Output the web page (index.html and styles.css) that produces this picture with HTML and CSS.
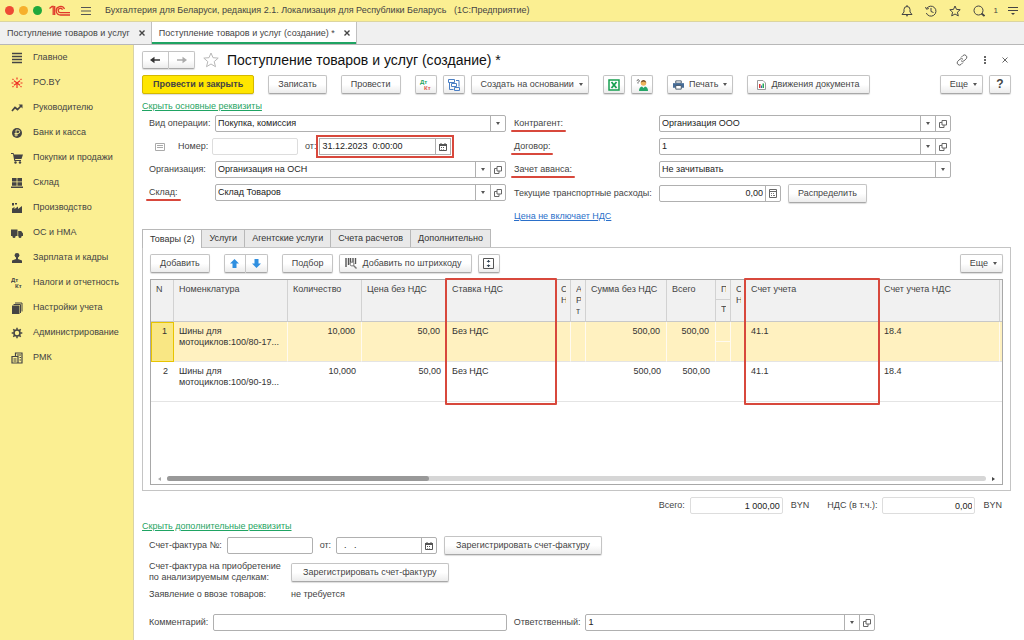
FILE: index.html
```
<!DOCTYPE html>
<html lang="ru">
<head>
<meta charset="utf-8">
<title>Поступление товаров и услуг (создание)</title>
<link rel="stylesheet" href="styles.css">
</head>
<body>
<svg class="defs" aria-hidden="true">
  <symbol id="open" viewBox="0 0 8 8"><path d="M3 .5h4.500v4.500H3zM3 2.500H.5v5h4.500V5" fill="none" stroke="#666"/></symbol>
  <symbol id="cal" viewBox="0 0 8 8"><path d="M.5 1.500h7v6h-7zM2 0v1M6 0v1" fill="none" stroke="#555"/><path d="M0 1h8v2H0zM2 4h1v1H2zM4 4h1v1H4zM2 6h1v.6H2zM4 6h1v.6H4z" fill="#555"/></symbol>
  <symbol id="calc" viewBox="0 0 8 9"><path d="M.5.5h7v8h-7zM1 2.500h6" fill="none" stroke="#666"/><path d="M2 4h1v1H2zM4 4h1v1H4zM2 6h1v1H2zM4 6h2v1H4z" fill="#777"/></symbol>
</svg>
<header class="topbar">
  <span class="dots"><i class="dot red"></i><i class="dot amber"></i><i class="dot green"></i></span>
  <svg class="logo" width="22" height="12" viewBox="0 0 22 12" fill="none" stroke="#e0392b"><path d="M.5 3.500 3 1.500h1.200V10M5.700 10V1" stroke-width="1.300"/><path d="M15.500 4A4.300 4.300 0 1 0 11.500 10H21" stroke-width="1.300"/><path d="M13.500 4.700A2.200 2.200 0 1 0 11.500 7.700H21" stroke-width="1.300"/></svg>
  <button class="bare" aria-label="Меню"><svg width="12" height="10" viewBox="0 0 12 10"><path d="M1 1.500h10M1 5h10M1 8.500h10" stroke="#555"/></svg></button>
  <span class="apptitle">Бухгалтерия для Беларуси, редакция 2.1. Локализация для Республики Беларусь &nbsp; (1С:Предприятие)</span>
  <span class="topicons">
    <button class="bare" aria-label="Уведомления"><svg width="12" height="12" viewBox="0 0 12 12" fill="none" stroke="#444"><path d="M1 9.500h10L9 7V4.500a3 3 0 0 0-6 0V7zM6 0v1.500M5 10.500q1 1 2 0"/></svg></button>
    <button class="bare" aria-label="История"><svg width="12" height="12" viewBox="0 0 12 12" fill="none" stroke="#444"><path d="M1.700 3.500A5 5 0 1 1 1.300 8M.5 2l1 2.200 2.300-.7M6 3v3.500l2.500 1"/></svg></button>
    <button class="bare" aria-label="Избранное"><svg width="12" height="12" viewBox="0 0 12 12" fill="none" stroke="#444"><path d="m6 1 1.500 3.400 3.700.3-2.800 2.500.9 3.700L6 9l-3.300 1.900.9-3.700L.8 4.700l3.700-.3z"/></svg></button>
    <button class="bare" aria-label="Поиск"><svg width="12" height="12" viewBox="0 0 12 12" fill="none" stroke="#444"><circle cx="5.500" cy="5.500" r="4.500"/><path d="m8.500 8.500 3 2.500" stroke-width="1.800"/></svg></button>
    <span class="count">1</span>
    <button class="bare" aria-label="Сервис"><svg width="12" height="10" viewBox="0 0 12 10"><path d="M1 1.500h10M1 4.500h10" stroke="#444"/><path d="M4 7h4L6 9z" fill="#444"/></svg></button>
  </span>
</header>
<nav class="tabs">
  <div class="tab"><a href="#">Поступление товаров и услуг</a><button class="bare close" aria-label="Закрыть"><svg width="6" height="6" viewBox="0 0 6 6"><path d="m.5.5 5 5m0-5-5 5" stroke="#444" stroke-width="1.400"/></svg></button></div>
  <div class="tab current"><a href="#">Поступление товаров и услуг (создание) *</a><button class="bare close" aria-label="Закрыть"><svg width="6" height="6" viewBox="0 0 6 6"><path d="m.5.5 5 5m0-5-5 5" stroke="#444" stroke-width="1.400"/></svg></button></div>
</nav>
<div class="shell">
<nav class="side">
  <a href="#"><svg viewBox="0 0 12 12"><path d="M1 1.500h10M1 4.500h10M1 7.500h10M1 10.500h10" stroke="#444" stroke-width="1.500"/></svg>Главное</a>
  <a href="#"><svg viewBox="0 0 12 12"><path d="M6 6 3 3.800M6 6l3-2.200M6 6v5M6 6 3 8.200M6 6l3 2.200M6 .5v2M.5 6h2M9.500 6h2M1.500 2l1 .8M10.500 2l-1 .8M1.500 10l1-.8M10.500 10l-1-.8" stroke="#ee3124" stroke-width="1.200"/></svg>PO.BY</a>
  <a href="#"><svg viewBox="0 0 12 12"><path d="m1 9 3-3.500 2.500 2L10 4" fill="none" stroke="#444" stroke-width="1.700"/><path d="M7.500 2.500H11.500V6.500z" fill="#444"/></svg>Руководителю</a>
  <a href="#"><svg viewBox="0 0 12 12"><circle cx="6" cy="6" r="5" fill="#444"/><path d="M5 9.500V3h2a1.700 1.700 0 0 1 0 3.500H3.500M3.500 8H7" fill="none" stroke="#fbef92" stroke-width=".9"/></svg>Банк и касса</a>
  <a href="#"><svg viewBox="0 0 12 12" fill="#444"><path d="M0 1h2.500l.5 1.500h9L10.500 7H4l.3 1H10v1H3.300L2 2H0z"/><circle cx="4.500" cy="10.500" r="1.200"/><circle cx="9" cy="10.500" r="1.200"/></svg>Покупки и продажи</a>
  <a href="#"><svg viewBox="0 0 12 12" fill="#444"><path d="M1 1h4.600v3.500H1zM6.400 1H11v3.500H6.400zM1 5.200h4.600v3.500H1zM6.400 5.200H11v3.500H6.400zM0 9.500h12V11H0z"/></svg>Склад</a>
  <a href="#"><svg viewBox="0 0 12 12" fill="#444"><path d="M1 11V6.500L3.500 5v2L7 4.500V7l4-3v7zM1 1h2v2.500H1zM4 1h2v1.500H4z"/></svg>Производство</a>
  <a href="#"><svg viewBox="0 0 12 12" fill="#444"><path d="M0 2.500h6.500V9H0zM7.200 4h3L12 6.500V9H7.200z"/><circle cx="3" cy="9.500" r="1.500"/><circle cx="9" cy="9.500" r="1.500"/></svg>ОС и НМА</a>
  <a href="#"><svg viewBox="0 0 12 12" fill="#444"><circle cx="6" cy="3.300" r="2.400"/><path d="M5 5h2v2l4 1.500V11H1V8.500L5 7z"/></svg>Зарплата и кадры</a>
  <a href="#"><svg viewBox="0 0 12 12" fill="#444" font-size="6" font-weight="700"><text x="0" y="5">Дт</text><text x="4" y="11">Кт</text></svg>Налоги и отчетность</a>
  <a href="#"><svg viewBox="0 0 12 12"><path d="M1 3.500h7.500V12H1z" fill="#444"/><path d="M2.500 2.500h7V11M4 1h7v8.500" fill="none" stroke="#444"/></svg>Настройки учета</a>
  <a href="#"><svg viewBox="0 0 12 12" fill="none" stroke="#444"><circle cx="6" cy="6" r="3" stroke-width="1.600"/><path d="M6 .7v2M6 9.300v2M.7 6h2M9.300 6h2M2.300 2.300l1.300 1.300M8.400 8.400l1.300 1.300M2.300 9.700l1.300-1.300M8.400 3.600l1.300-1.300" stroke-width="1.500"/></svg>Администрирование</a>
  <a href="#"><svg viewBox="0 0 12 12" fill="none" stroke="#444" stroke-width="1.200"><path d="M1 4.500h6V11H1zM4.500 4V1H11v10H7.500M2.500 7h3M2.500 9h3M6 3h4M8.500 5.500h1.500M8.500 8h1.500"/></svg>РМК</a>
</nav>
<main class="doc">
  <div class="titlebar">
    <span class="pair"><button class="btn" aria-label="Назад"><svg width="11" height="8" viewBox="0 0 11 8"><path d="M10 4H3" stroke="#333" stroke-width="1.500"/><path d="M0 4 4.500.8v6.400z" fill="#333"/></svg></button><button class="btn" aria-label="Вперед"><svg width="11" height="8" viewBox="0 0 11 8"><path d="M1 4h7" stroke="#aaa" stroke-width="1.500"/><path d="M11 4 6.500.8v6.400z" fill="#aaa"/></svg></button></span>
    <svg width="16" height="16" viewBox="0 0 16 16"><path d="m8 1 2 4.700 5.200.4-4 3.500 1.300 5.100L8 12l-4.500 2.700 1.300-5.100-4-3.500L6 5.700z" fill="#fff" stroke="#b8b8b8"/></svg>
    <h1>Поступление товаров и услуг (создание) *</h1>
    <span class="docicons">
      <button class="bare" aria-label="Ссылка"><svg width="12" height="12" viewBox="0 0 12 12" fill="none" stroke="#666"><path d="m5 3.500 2-2q1.500-1.300 3 0t.5 3L8 6.800q-1.500 1.200-3 0M7 8.500l-2 2q-1.500 1.300-3 0t-.5-3L4 5.200q1.500-1.200 3 0"/></svg></button>
      <button class="bare" aria-label="Еще"><svg width="4" height="10" viewBox="0 0 4 10"><path d="M1 1h2v2H1zM1 4h2v2H1zM1 7h2v2H1z" fill="#666"/></svg></button>
      <button class="bare" aria-label="Закрыть"><svg width="6" height="6" viewBox="0 0 6 6"><path d="m.5.5 5 5m0-5-5 5" stroke="#666"/></svg></button>
    </span>
  </div>
  <div class="commands">
    <button class="btn primary">Провести и закрыть</button>
    <button class="btn">Записать</button>
    <button class="btn">Провести</button>
    <span class="set">
      <button class="btn icon" aria-label="Дт Кт"><svg width="14" height="12" viewBox="0 0 14 12" font-size="6" font-weight="700"><text x="1" y="5" fill="#1fa463">Дт</text><text x="5" y="11" fill="#e0584b">Кт</text></svg></button>
      <button class="btn icon" aria-label="Структура"><svg width="12" height="12" viewBox="0 0 12 12" fill="none" stroke="#4b7fc4"><path d="M.5.500h6v3h-6zM3.500 4.500h5v3h-5zM6.500 8.500h5v3h-5zM1.500 4v6.500h4M8 1.500h3v6"/></svg></button>
      <button class="btn drop">Создать на основании<i class="caret"></i></button>
    </span>
    <span class="set">
      <button class="btn icon" aria-label="Excel"><svg width="12" height="12" viewBox="0 0 12 12" fill="none" stroke="#17a050"><path d="M1 1h10v10H1z" stroke-width="1.500"/><path d="m3.500 3 5 6m0-6-5 6" stroke-width="1.800"/></svg></button>
      <button class="btn icon" aria-label="Помощник"><svg width="12" height="12" viewBox="0 0 12 12"><circle cx="7.500" cy="4" r="2.800" fill="#efb35b"/><path d="M4.800 3.500q.5-2.500 2.700-2.500t2.700 2.500L7.500 2.500z" fill="#704a28"/><path d="M3 12q0-4 3-4.500l1.500 1.500L9 7.500q3 .5 3 4.500z" fill="#25a667"/><path d="M.7 1.700Q2.500-.3 3.300 1.500 3.300 2.500 2 3.500v1" fill="none" stroke="#555"/></svg></button>
    </span>
    <button class="btn drop pic"><svg width="11" height="10" viewBox="0 0 12 10"><path d="M3 .5h6V3H3z" fill="#fff" stroke="#456"/><path d="M0 3h12v5H0z" fill="#456b96"/><path d="M3 5.500h6v4H3z" fill="#fff" stroke="#456"/></svg>Печать<i class="caret"></i></button>
    <button class="btn">
      <svg width="9" height="10" viewBox="0 0 9 10"><path d="M.5.5h5.500l2.500 2.500v6.500h-8z" fill="#fff" stroke="#999"/><path d="M2 4h1.500v4H2z" fill="#d33"/><path d="M4 5.500h1V8H4z" fill="#36a"/><path d="M5.500 3.500H7V8H5.500z" fill="#2a5"/></svg>Движения документа</button>
    <span class="set end"><button class="btn drop">Еще<i class="caret"></i></button><button class="btn icon help">?</button></span>
  </div>

  <a class="toggle" href="#">Скрыть основные реквизиты</a>
  <div class="form">
    <div class="col">
      <div class="row"><label for="op">Вид операции:</label><span class="field pick"><select id="op"><option>Покупка, комиссия</option></select><span class="cell"><i class="caret"></i></span></span></div>
      <div class="row"><span class="num"><svg width="10" height="8" viewBox="0 0 10 8"><path d="M.5.500h9v7h-9z" fill="none" stroke="#aaa"/><path d="M2 2.500h6M2 4.500h6" stroke="#aaa"/></svg><label for="no">Номер:</label></span><span class="numdate"><input class="plain faint" id="no"><label for="dt">от:</label><span class="field marked"><input id="dt" value="31.12.2023  0:00:00"><button class="cell" aria-label="Календарь"><svg width="8" height="8"><use href="#cal"/></svg></button></span></span></div>
      <div class="row"><label for="org">Организация:</label><span class="field"><input id="org" value="Организация на ОСН"><button class="cell" aria-label="Выбрать"><i class="caret"></i></button><button class="cell" aria-label="Открыть"><svg width="8" height="8"><use href="#open"/></svg></button></span></div>
      <div class="row"><label for="wh" class="under">Склад:</label><span class="field"><input id="wh" value="Склад Товаров"><button class="cell" aria-label="Выбрать"><i class="caret"></i></button><button class="cell" aria-label="Открыть"><svg width="8" height="8"><use href="#open"/></svg></button></span></div>
    </div>
    <div class="col right">
      <div class="row"><label for="ka" class="under">Контрагент:</label><span class="field"><input id="ka" value="Организация ООО"><button class="cell" aria-label="Выбрать"><i class="caret"></i></button><button class="cell" aria-label="Открыть"><svg width="8" height="8"><use href="#open"/></svg></button></span></div>
      <div class="row"><label for="dg" class="under">Договор:</label><span class="field"><input id="dg" value="1"><button class="cell" aria-label="Выбрать"><i class="caret"></i></button><button class="cell" aria-label="Открыть"><svg width="8" height="8"><use href="#open"/></svg></button></span></div>
      <div class="row"><label for="av" class="under">Зачет аванса:</label><span class="field pick"><select id="av"><option>Не зачитывать</option></select><span class="cell"><i class="caret"></i></span></span></div>
      <div class="row"><label for="tr">Текущие транспортные расходы:</label><span class="costs"><span class="field"><input class="r" id="tr" value="0,00"><button class="cell" aria-label="Калькулятор"><svg width="8" height="9"><use href="#calc"/></svg></button></span><button class="btn">Распределить</button></span></div>
      <a class="vat" href="#">Цена не включает НДС</a>
    </div>
  </div>

  <div class="pages" role="tablist">
    <button role="tab" class="page on">Товары (2)</button><button role="tab" class="page">Услуги</button><button role="tab" class="page">Агентские услуги</button><button role="tab" class="page">Счета расчетов</button><button role="tab" class="page">Дополнительно</button>
  </div>
  <section class="panel">
    <div class="tools">
      <button class="btn">Добавить</button>
      <span class="pair small"><button class="btn" aria-label="Вверх"><svg width="9" height="9" viewBox="0 0 9 9"><path d="M4.500 0 9 4.500H6.500V9h-4V4.500H0z" fill="#2f8fe0"/></svg></button><button class="btn" aria-label="Вниз"><svg width="9" height="9" viewBox="0 0 9 9"><path d="M4.500 9 0 4.500h2.500V0h4v4.500H9z" fill="#2f8fe0"/></svg></button></span>
      <span class="set"><button class="btn">Подбор</button>
      <button class="btn pic"><svg width="12" height="11" viewBox="0 0 12 11"><path d="M1 0v9M3.500 0v7M5.500 0v6M8 0v4M10.500 0v6" stroke="#555" stroke-width="1.400"/><circle cx="7" cy="6" r="2" fill="#fff" stroke="#777"/><path d="m8.500 7.500 3 3" stroke="#777" stroke-width="1.400"/></svg>Добавить по штрихкоду</button>
      <button class="btn icon" aria-label="Высота строк"><svg width="11" height="11" viewBox="0 0 11 11"><path d="M.5.5h10v10H.5z" fill="none" stroke="#555"/><path d="M5.500 2v2.500M5.500 6.500V9" stroke="#345"/><path d="M3.500 4 5.500 2l2 2zM3.500 7l2 2 2-2z" fill="#345"/></svg></button></span>
      <span class="end"><button class="btn drop">Еще<i class="caret"></i></button></span>
    </div>
    <div class="grid">
      <table>
        <colgroup><col class="c22"><col class="c115"><col class="c74"><col class="c85"><col class="c109"><col class="c15"><col class="c15"><col class="c81"><col class="c49"><col class="c15"><col class="c15"><col class="c132"><col><col class="c2"></colgroup>
        <thead><tr><th>N</th><th>Номенклатура</th><th>Количество</th><th>Цена без НДС</th><th class="boxed">Ставка НДС</th><th class="thin"><span>С</span><span>Н</span></th><th class="thin"><span>А</span><span>Р</span><span>т</span></th><th>Сумма без НДС</th><th>Всего</th><th class="split"><div><span>П</span></div><div><span>Т</span></div></th><th class="thin"><span>С</span><span>Н</span></th><th class="boxed">Счет учета</th><th>Счет учета НДС</th><th></th></tr></thead>
        <tbody>
          <tr class="sel"><td class="r active">1</td><td>Шины для мотоциклов:100/80-17...</td><td class="r">10,000</td><td class="r">50,00</td><td>Без НДС</td><td></td><td></td><td class="r">500,00</td><td class="r">500,00</td><td class="split"><div></div><div></div></td><td></td><td>41.1</td><td>18.4</td><td></td></tr>
          <tr><td class="r">2</td><td>Шины для мотоциклов:100/90-19...</td><td class="r">10,000</td><td class="r">50,00</td><td>Без НДС</td><td></td><td></td><td class="r">500,00</td><td class="r">500,00</td><td></td><td></td><td>41.1</td><td>18.4</td><td></td></tr>
        </tbody>
      </table>
      <div class="scroll"><i class="arrow left"></i><div class="track"><div class="thumb"></div></div><i class="arrow"></i></div>
    </div>
  </section>
  <div class="totals">
    <label for="sum">Всего:</label><input class="plain faint r" id="sum" value="1 000,00"><span class="cur">BYN</span>
    <label for="nds">НДС (в т.ч.):</label><input class="plain faint r" id="nds" value="0,00"><span class="cur last">BYN</span>
  </div>

  <a class="toggle" href="#">Скрыть дополнительные реквизиты</a>
  <div class="extra">
    <div class="line"><label for="sf">Счет-фактура №:</label><input class="plain sf" id="sf"><label for="sfd">от:</label><span class="field sfd"><input id="sfd" value="  .   ."><button class="cell" aria-label="Календарь"><svg width="8" height="8"><use href="#cal"/></svg></button></span><button class="btn">Зарегистрировать счет-фактуру</button></div>
    <div class="line two"><span>Счет-фактура на приобретение по анализируемым сделкам:</span><button class="btn">Зарегистрировать счет-фактуру</button></div>
    <div class="line two"><span>Заявление о ввозе товаров:</span><span>не требуется</span></div>
    <div class="line foot"><label for="cm">Комментарий:</label><input class="plain grow" id="cm"><label for="rs">Ответственный:</label><span class="field grow"><input id="rs" value="1"><button class="cell" aria-label="Выбрать"><i class="caret"></i></button><button class="cell" aria-label="Открыть"><svg width="8" height="8"><use href="#open"/></svg></button></span></div>
  </div>
</main>
</div>
</body>
</html>
```
FILE: styles.css
```
*, *::after { box-sizing: border-box; }
body { margin: 0; min-height: 100vh; display: flex; flex-direction: column; font: 9px/11px "Liberation Sans", Arial, sans-serif; color: #444; background: #fff; }
button, input, select { font: inherit; color: inherit; margin: 0; }
a { color: inherit; text-decoration: none; }
.defs { position: absolute; width: 0; height: 0; }
.bare { border: 0; background: none; padding: 0; display: inline-flex; align-items: center; }

.topbar { display: flex; align-items: center; height: 22px; padding: 0 5px; background: #fbef92; border-bottom: 1px solid #dcd5a0; }
.dots { display: flex; gap: 5px; }
.dot { width: 9px; height: 9px; border-radius: 50%; }
.red { background: #ee4b35; }
.amber { background: #f6b02c; }
.green { background: #1fa83c; }
.logo { margin: 0 9px 0 7px; }
.apptitle { margin-left: 13px; flex: 1; white-space: nowrap; }
.topicons { display: flex; align-items: center; gap: 12px; }
.count { font-size: 8px; margin: 0 -3px; }

.tabs { display: flex; height: 23px; background: #f0f0f0; border-bottom: 1px solid #b8b8b8; }
.tab { display: flex; align-items: center; gap: 9px; padding: 0 6px 0 7px; border-right: 1px solid #c0c0c0; }
.tab.current { background: #fff; box-shadow: inset 0 -2px 0 #1fa463, inset 2px 0 0 #fff; }

.shell { flex: 1; display: flex; }
.side { flex: none; width: 134px; background: #fbef92; border-right: 1px solid #d9d3a6; }
.side a { display: flex; align-items: center; gap: 10px; height: 25px; padding-left: 11px; white-space: nowrap; }
.side svg { width: 12px; height: 12px; }
.doc { flex: 1; min-width: 0; padding: 6px 13px 8px 8px; }

.btn { display: inline-flex; align-items: center; justify-content: center; gap: 5px; height: 19px; padding: 0 9px; border: 1px solid #c4c4c4; border-bottom-color: #a8a8a8; border-radius: 2px; background: linear-gradient(#fff 50%, #ececec); box-shadow: 0 1px 1px #ddd; white-space: nowrap; }
.btn.icon { width: 22px; padding: 0; }
.btn.drop { padding-right: 5px; }
.btn.pic { padding-left: 5px; }
.btn.primary { padding: 0 10px; background: #ffe600; border-color: #d4b800; font-weight: 700; }
.btn.help { font-size: 12px; font-weight: 700; }
.caret { width: 0; height: 0; border: 2px solid transparent; border-top: 3px solid #555; border-bottom: 0; }
.pair { display: inline-flex; }
.pair .btn { width: 27px; height: 18px; padding: 0; }
.pair .btn:first-child { border-radius: 2px 0 0 2px; }
.pair .btn + .btn { border-left: 0; border-radius: 0 2px 2px 0; width: 26px; }
.pair.small .btn { width: 22px; height: 19px; }
.titlebar { display: flex; align-items: center; gap: 8px; height: 18px; }
h1 { margin: 0; font-size: 14px; line-height: 18px; font-weight: 400; color: #111; white-space: nowrap; }
.docicons { margin-left: auto; display: flex; align-items: center; gap: 15px; padding-right: 3px; }
.commands { display: flex; gap: 14px; margin-top: 6px; }
.set { display: flex; gap: 6px; }
.end { margin-left: auto; }

.toggle { display: inline-block; margin-top: 7px; color: #1fa463; text-decoration: underline; }
.form { display: flex; gap: 8px; padding: 3px 60px 0 7px; }
.col { flex: 1 1 357px; min-width: 0; display: grid; grid-template-rows: repeat(4, 17px) auto; gap: 6px; }
.col.right { flex-basis: 437px; }
.row { display: grid; grid-template-columns: 66px 1fr; align-items: center; }
.right .row { grid-template-columns: 145px 1fr; }
.row label { white-space: nowrap; }
.field { display: flex; min-width: 0; height: 17px; border: 1px solid #b0b0b0; border-radius: 2px; background: #fff; }
.field input { flex: 1; min-width: 0; border: 0; padding: 0 2px; background: none; color: #222; }
.cell { flex: none; width: 15px; display: flex; align-items: center; justify-content: center; padding: 0; border: 0; border-left: 1px solid #b0b0b0; background: none; }
.pick { display: grid; grid-template-columns: 1fr 15px; }
.pick select { grid-area: 1 / 1 / 2 / 3; appearance: none; border: 0; background: none; padding: 0 2px; color: #222; }
.pick .cell { grid-area: 1 / 2; pointer-events: none; }
.plain { height: 17px; border: 1px solid #b0b0b0; border-radius: 2px; padding: 0 2px; min-width: 0; color: #222; background: #fff; }
.faint { border-color: #ddd; }
.r { text-align: right; }
.num { display: flex; align-items: center; gap: 13px; padding-left: 6px; }
.numdate { display: flex; align-items: center; margin-left: -3px; }
.numdate .plain { width: 86px; margin-right: 7px; }
.marked { width: 132px; margin-left: 3px; outline: 2px solid #d8483c; outline-offset: 1px; border-radius: 0; }
.marked input { white-space: pre; }
.under { position: relative; justify-self: start; }
.under::after { content: ""; position: absolute; left: -3px; right: -3px; bottom: -3px; height: 2px; border-radius: 1px; background: #d8483c; }
.costs { display: flex; align-items: center; gap: 7px; }
.costs .field { width: 122px; }
.vat { justify-self: start; margin-top: 4px; color: #2a6fc9; text-decoration: underline; }

.pages { display: flex; margin-top: 7px; }
.page { height: 18px; padding: 0 7px; border: 1px solid #b8b8b8; border-left: 0; border-bottom: 0; background: #e9e9e9; color: #333; white-space: nowrap; }
.page.on { background: #fff; border-left: 1px solid #b8b8b8; margin-bottom: -1px; height: 19px; position: relative; }
.panel { border: 1px solid #c4c4c4; padding: 6px 7px 5px; }
.tools { display: flex; gap: 14px; }
.grid { margin-top: 6px; min-height: 206px; display: flex; flex-direction: column; border: 1px solid #a8a8a8; }
table { width: 100%; table-layout: fixed; border-collapse: separate; border-spacing: 0; }
.c22 { width: 23px; } .c115 { width: 114px; } .c74 { width: 74px; } .c85 { width: 85px; } .c109 { width: 109px; } .c15 { width: 15px; }
.c81 { width: 81px; } .c49 { width: 49px; } .c132 { width: 133px; } .c2 { width: 2px; }
th { height: 42px; padding: 4px 5px; text-align: left; vertical-align: top; font-weight: 400; background: #f1f1f1; border-right: 1px solid #d2d2d2; border-bottom: 1px solid #c8c8c8; white-space: nowrap; }
td { height: 40px; padding: 4px 5px; vertical-align: top; color: #333; border-bottom: 1px solid #e4e4e4; }
td.r { padding-right: 6px; }
.sel td { background: #fff1c0; border-right: 1px solid #fffaf0; }
.sel td.active { background: #f9e784; outline: 1px solid #e8c400; outline-offset: -1px; }
th:last-child, td:last-child { padding: 0; border-right: 0; }
.thin span, .split span { display: block; width: 5px; overflow: hidden; }
th.split, td.split { padding: 0; }
.split div { height: 20px; padding: 4px 5px 0; }
.split div:first-child { border-bottom: 1px solid #d2d2d2; }
.split div + div { height: 19px; }
.sel .split div:first-child { border-color: #fffaf0; }
.boxed { position: relative; }
.boxed::after { content: ""; position: absolute; left: -2px; right: -2px; top: -2px; height: 127px; border: 2px solid #d8483c; border-radius: 1px; z-index: 1; }
.scroll { margin-top: auto; display: flex; align-items: center; gap: 6px; padding: 3px 7px; }
.track { flex: 1; height: 5px; border-radius: 3px; background: #d6d6d6; }
.thumb { width: 32%; height: 5px; border-radius: 3px; background: #999; }
.arrow { border: 2px solid transparent; border-left: 3px solid #444; border-right: 0; }
.arrow.left { border-left: 0; border-right: 3px solid #aaa; }

.totals { display: flex; align-items: center; justify-content: flex-end; padding: 6px 9px 0 0; }
.totals .plain { width: 93px; margin: 0 8px 0 5px; }
.cur { margin-right: 18px; }
.cur.last { margin-right: 0; }
.extra { padding: 4px 0 0 7px; }
.line { display: flex; align-items: center; gap: 7px; }
.line .btn { padding: 0 11px; }
.sf { width: 86px; margin-left: -2px; }
.sfd { width: 101px; margin-left: -2px; }
.sfd input { white-space: pre; }
.line.two { display: grid; grid-template-columns: 135px auto; justify-content: start; margin-top: 6px; }
.foot { margin-top: 14px; padding-right: 136px; }
.foot .grow { flex: 1; margin-left: -2px; }
```
